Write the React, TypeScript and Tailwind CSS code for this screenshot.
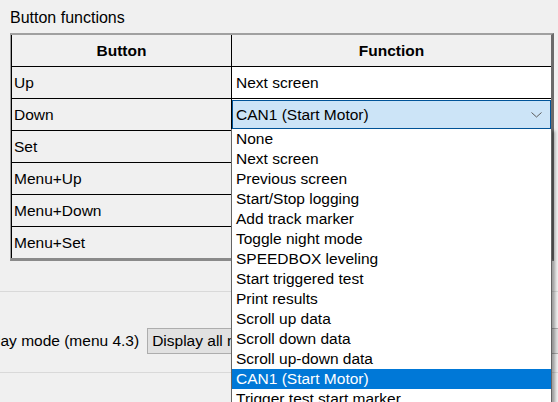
export default function App() {
  const rows = ["Up", "Down", "Set", "Menu+Up", "Menu+Down", "Menu+Set"];
  const items = [
    "None",
    "Next screen",
    "Previous screen",
    "Start/Stop logging",
    "Add track marker",
    "Toggle night mode",
    "SPEEDBOX leveling",
    "Start triggered test",
    "Print results",
    "Scroll up data",
    "Scroll down data",
    "Scroll up-down data",
    "CAN1 (Start Motor)",
    "Trigger test start marker",
  ];
  const selected = 12;
  return (
    <div className="w-[558px] h-[402px] overflow-hidden bg-[#f0f0f0] font-['Liberation_Sans',Arial,sans-serif] text-[15.5px] text-black">
      <div className="pl-[10px] pt-[9px] h-[33px] leading-[18px] text-[16px]">Button functions</div>
      <div className="ml-[10px] w-[544px] border-t-2 border-l border-t-[#a0a0a0] border-l-[#a0a0a0] border-r-[3px] border-r-[#6b6b6b] border-b-[3px] border-b-[#8a8a8a]">
        <div className="grid grid-cols-[220px_319px] border-l border-black">
          <div className="h-[32px] border-b border-r border-black flex items-center justify-center font-bold">Button</div>
          <div className="h-[32px] border-b border-black flex items-center justify-center font-bold">Function</div>
          {rows.map((r, i) => {
            const last = i === rows.length - 1;
            return (
              <div key={r} className="contents">
                <div
                  className={`${last ? "h-[31px]" : "h-[32px] border-b"} border-r border-black flex items-center pl-[2px]`}
                >
                  {r}
                </div>
                {i === 0 ? (
                  <div className="h-[32px] border-b border-black bg-white flex items-center pl-[4px]">Next screen</div>
                ) : i === 1 ? (
                  <div className="h-[32px] border-b border-black bg-white relative">
                    <div className="mt-[1px] h-[29px] bg-[#cce4f7] border border-[#005499] flex items-center justify-between pl-[3px] pr-[8px]">
                      <span>CAN1 (Start Motor)</span>
                      <svg width="11" height="6" viewBox="0 0 11 6" className="mt-[1px]">
                        <path d="M0.5 0.5 L5.5 5 L10.5 0.5" fill="none" stroke="#5a5a5a" strokeWidth="1" />
                      </svg>
                    </div>
                    <div className="absolute left-[-1px] top-[30px] w-[321px] z-10 bg-white border-l border-r border-[#646464] shadow-[3px_2px_3px_rgba(0,0,0,0.35)]">
                      {items.map((it, k) => (
                        <div
                          key={it}
                          className={`h-[20px] leading-[20px] pl-[4px] whitespace-nowrap ${
                            k === selected ? "bg-[#0078d7] text-white" : ""
                          }`}
                        >
                          {it}
                        </div>
                      ))}
                    </div>
                  </div>
                ) : (
                  <div className={`${last ? "h-[31px]" : "h-[32px] border-b"} border-black bg-white`} />
                )}
              </div>
            );
          })}
        </div>
      </div>
      <div className="mt-[30px] border-t border-b border-[#d9d9d9] h-[82px] pt-[36px]">
        <div className="flex items-center h-[26px] whitespace-nowrap">
          <span className="ml-[-34px]">Display mode (menu 4.3)</span>
          <div className="ml-[8px] w-[420px] h-[26px] bg-[#e1e1e1] border border-[#adadad] flex items-center pl-[4px] shrink-0">
            Display all numbers
          </div>
        </div>
      </div>
    </div>
  );
}
